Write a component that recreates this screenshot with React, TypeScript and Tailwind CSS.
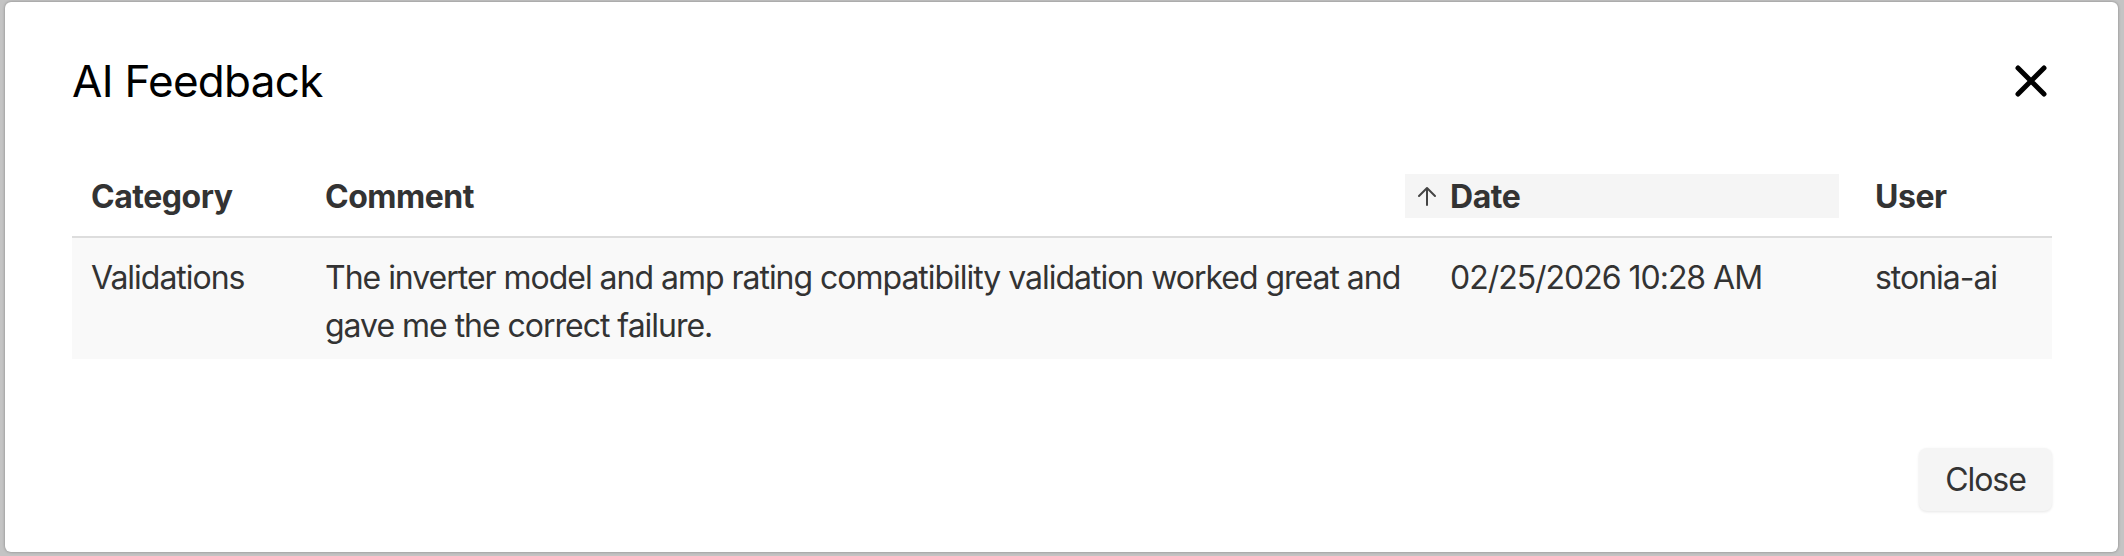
import React from 'react';

const rows = [
  {
    category: 'Validations',
    comment: 'The inverter model and amp rating compatibility validation worked great and gave me the correct failure.',
    date: '02/25/2026 10:28 AM',
    user: 'stonia-ai',
  },
];

function CloseIcon() {
  return (
    <svg width="32" height="32" viewBox="0 0 32 32" fill="none">
      <path d="M3 3 L29 29 M29 3 L3 29" stroke="#000" strokeWidth="5" strokeLinecap="round" />
    </svg>
  );
}

function SortUpIcon() {
  return (
    <svg width="20" height="20" viewBox="0 0 20 20" fill="none">
      <path d="M10 19 V2 M2 10 L10 2 L18 10" stroke="#444" strokeWidth="2" strokeLinecap="round" strokeLinejoin="round" />
    </svg>
  );
}

export default function App() {
  return (
    <div className="w-[2124px] h-[556px] bg-[#c4c4c4] pt-[2px] pl-[5px] overflow-hidden" style={{ fontFamily: 'Inter, "Noto Sans", sans-serif' }}>
      <div className="w-[2113px] h-[550px] bg-white rounded-[6px] shadow-[0_0_3px_rgba(0,0,0,0.35)] flex flex-col pl-[67px] pr-[66px]">
        {/* Header */}
        <div className="mt-[53px] h-[52px] flex items-center justify-between">
          <h2 className="text-[44px] leading-[52px] font-normal tracking-[-0.016em] text-black">AI Feedback</h2>
          <button className="mr-[5px] w-[32px] h-[32px] flex items-center justify-center">
            <CloseIcon />
          </button>
        </div>

        {/* Table */}
        <table className="mt-[49px] w-[1980px] table-fixed border-collapse text-[32px] text-[#333333] tracking-[-0.032em]">
          <colgroup>
            <col className="w-[234px]" />
            <col className="w-[1099px]" />
            <col className="w-[451px]" />
            <col className="w-[196px]" />
          </colgroup>
          <thead>
            <tr className="border-b-2 border-[#dddddd]">
              <th className="py-[18px] pl-[19px] text-left font-bold leading-[44px] tracking-[-0.015em]">
                <span className="relative top-[1px]">Category</span>
              </th>
              <th className="py-[18px] pl-[19px] text-left font-bold leading-[44px] tracking-[-0.015em]">
                <span className="relative top-[1px]">Comment</span>
              </th>
              <th className="py-[18px] text-left font-bold leading-[44px] tracking-[-0.015em]">
                <div className="w-[434px] h-[44px] bg-[#f5f5f5] flex items-center pl-[12px] gap-[13px]">
                  <SortUpIcon />
                  <span className="pt-[2px]">Date</span>
                </div>
              </th>
              <th className="py-[18px] pl-[19px] text-left font-bold leading-[44px] tracking-[-0.015em]">
                <span className="relative top-[1px]">User</span>
              </th>
            </tr>
          </thead>
          <tbody>
            {rows.map((r) => (
              <tr key={r.date} className="bg-[#f9f9f9] align-top leading-[48px]">
                <td className="pl-[19px] pt-[16px] pb-[9px]">{r.category}</td>
                <td className="pl-[19px] pr-[2px] pt-[16px] pb-[9px]">{r.comment}</td>
                <td className="pl-[45px] pt-[16px] pb-[9px]">{r.date}</td>
                <td className="pl-[19px] pt-[16px] pb-[9px]">{r.user}</td>
              </tr>
            ))}
          </tbody>
        </table>

        {/* Footer */}
        <div className="mt-auto mb-[41px] flex justify-end">
          <button className="w-[133px] h-[63px] rounded-[8px] bg-[#f5f5f5] shadow-[0_1px_3px_rgba(0,0,0,0.1)] text-[32px] tracking-[-0.032em] text-[#333333] flex items-center justify-center">
            Close
          </button>
        </div>
      </div>
    </div>
  );
}
